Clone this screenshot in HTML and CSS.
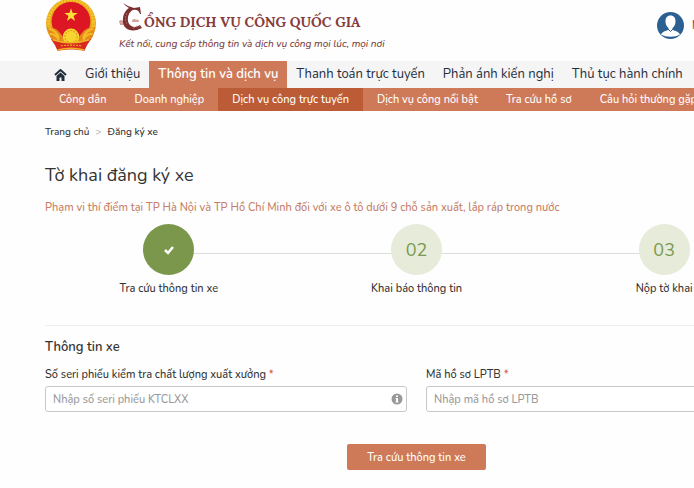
FILE: index.html
```html
<!DOCTYPE html>
<html lang="vi">
<head>
    <meta charset="UTF-8">
    <meta name="viewport" content="width=device-width, initial-scale=1.0">
    <title>Tờ khai đăng ký xe</title>
    <link rel="stylesheet" href="styles.css">
</head>
<body>

    <header class="header">
        <svg class="emblem" viewBox="0 0 50 51" aria-hidden="true">
            <circle cx="25" cy="23" r="24.500" fill="#e9a81c"/>
            <circle cx="25" cy="22" r="22" fill="none" stroke="#f3c52b" stroke-width="3" stroke-dasharray="2 1"/>
            <circle cx="25" cy="21" r="19" fill="#dc1622"/>
            <path d="M25 8l1.600 4.700h4.900l-4 3 1.500 4.800-4-2.900-4 2.900 1.500-4.800-4-3h4.900z" fill="#ffe036"/>
            <path d="M1 27c5-1 10 1 13 5l4 5h14l4-5c3-4 8-6 13-5l-3 10-7 6H12l-7-6z" fill="#e58a1c"/>
            <path d="M3 28c4 1 8 4 10 9M4 33c4 0 7 2 9 6M47 28c-4 1-8 4-10 9M46 33c-4 0-7 2-9 6" fill="none" stroke="#f5bd25" stroke-width="2"/>
            <circle cx="25" cy="36" r="8" fill="#f9d62f"/>
            <circle cx="25" cy="36" r="6" fill="none" stroke="#dd9d1d" stroke-width="1" stroke-dasharray="2 1"/>
            <path d="M5 38c13 5 27 5 40 0l-4 6-3 6c-8-2-18-2-26 0l-3-6z" fill="#d92a20"/>
            <path d="M7 39c12 4 24 4 36 0M12 49c8-2 18-2 26 0" fill="none" stroke="#f2b323" stroke-width="1.500"/>
            <path d="M15 45c7-1 13-1 20 0" fill="none" stroke="#efb024" stroke-width="1" stroke-dasharray="2 1"/>
        </svg>
        <div class="brand">
            <div class="brand-name">
                <svg class="brand-mark" viewBox="0 0 25 29" aria-hidden="true">
                    <path d="M0 20c0-2 3-3 4-1 1-2 4-1 4 1v2H1zM1 23h7v-1H1zM13 19c0-2 3-3 4-1 2-1 3 0 3 2h-7z" fill="#d3a49d"/>
                    <path d="M4 1l5 3 6 2 6-1 1 7h-1c-1-4-4-5-7-4-5 2-7 11-3 15 3 3 7 2 10 0l2 3-5 2C9 30 3 25 4 17c0-5 3-9 6-11L7 4z" fill="#7d3030"/>
                    <path d="M8 11c-2 4-2 8 0 11M14 26l7-2" fill="none" stroke="#ad665c" stroke-width="1" stroke-dasharray="2 1"/>
                </svg>
                <span>ỔNG DỊCH VỤ CÔNG QUỐC GIA</span>
            </div>
            <p class="slogan">Kết nối, cung cấp thông tin và dịch vụ công mọi lúc, mọi nơi</p>
        </div>
        <a class="account" href="#">
            <svg class="avatar" viewBox="0 0 27 27" aria-hidden="true">
                <circle cx="13.500" cy="13.500" r="13.500" fill="#2c6093"/>
                <path d="M13.500 3.500c3.500 0 5 2.500 5 6 0 3-1.500 5.500-3 6.500v2c3 1 6 1.500 7.500 4.500-5 3-14 3-19 0 1.500-3 4.500-3.500 7.500-4.500v-2c-1.500-1-3-3.500-3-6.500 0-3.500 1.500-6 5-6z" fill="#fff"/>
                <path d="M11 17l2.500 2.500L16 17" fill="none" stroke="#2c6093" stroke-width="1"/>
            </svg>
            <span>N</span>
        </a>
    </header>

    <nav class="main-nav">
        <a class="home" href="#" aria-label="Trang chủ">
            <svg viewBox="0 0 13 12" aria-hidden="true">
                <path d="M1 6l5.500-5L12 6" fill="none" stroke="#1f2d3d" stroke-width="2"/>
                <path d="M2.500 7l4-3.500 4 3.500v5h-3V8.500h-2V12h-3z" fill="#1f2d3d"/>
            </svg>
        </a>
        <a href="#">Giới thiệu</a>
        <a class="active" href="#">Thông tin và dịch vụ</a>
        <a href="#">Thanh toán trực tuyến</a>
        <a href="#">Phản ánh kiến nghị</a>
        <a href="#">Thủ tục hành chính</a>
    </nav>
    <nav class="sub-nav">
        <a href="#">Công dân</a>
        <a href="#">Doanh nghiệp</a>
        <a class="active" href="#">Dịch vụ công trực tuyến</a>
        <a href="#">Dịch vụ công nổi bật</a>
        <a href="#">Tra cứu hồ sơ</a>
        <a href="#">Câu hỏi thường gặp</a>
    </nav>

    <main class="container">
        <div class="breadcrumb">
            <a href="#">Trang chủ</a>
            <span class="separator">&gt;</span>
            <a href="#">Đăng ký xe</a>
        </div>

        <h1>Tờ khai đăng ký xe</h1>
        <p class="notice">Phạm vi thí điểm tại TP Hà Nội và TP Hồ Chí Minh đối với xe ô tô dưới 9 chỗ sản xuất, lắp ráp trong nước</p>

        <ol class="steps">
            <li class="step done">
                <span class="circle">
                    <svg viewBox="0 0 12 10" aria-hidden="true"><path d="M2 5l3 3 5-6" fill="none" stroke="#fff" stroke-width="2.500"/></svg>
                </span>
                <span>Tra cứu thông tin xe</span>
            </li>
            <li class="step">
                <span class="circle">02</span>
                <span>Khai báo thông tin</span>
            </li>
            <li class="step">
                <span class="circle">03</span>
                <span>Nộp tờ khai</span>
            </li>
        </ol>

        <form class="search-form">
            <h2>Thông tin xe</h2>
            <div class="fields">
                <div class="field">
                    <label for="seri">Số seri phiếu kiểm tra chất lượng xuất xưởng <span class="required">*</span></label>
                    <div class="input-wrap">
                        <input type="text" id="seri" placeholder="Nhập số seri phiếu KTCLXX">
                        <svg class="info" viewBox="0 0 12 12" aria-hidden="true">
                            <circle cx="6" cy="6" r="5.500" fill="#999"/>
                            <path d="M5 2.500h2v1.500H5zM4.500 5H7v3.500h.5v1h-3v-1H5V6h-.5z" fill="#fff"/>
                        </svg>
                    </div>
                </div>
                <div class="field">
                    <label for="code">Mã hồ sơ LPTB <span class="required">*</span></label>
                    <div class="input-wrap">
                        <input type="text" id="code" placeholder="Nhập mã hồ sơ LPTB">
                    </div>
                </div>
            </div>
            <button type="button">Tra cứu thông tin xe</button>
        </form>
    </main>

</body>
</html>
```
FILE: styles.css
```css
* {
    margin: 0;
    padding: 0;
    box-sizing: border-box;
}

html {
    overflow-x: hidden;
}

body {
    min-width: 833px;
    background: #fefefe;
    color: #333;
    font-family: Nunito, Lato, "Noto Sans", sans-serif;
    font-size: 11px;
    font-weight: 500;
    line-height: 16px;
}

a {
    color: inherit;
    text-decoration: none;
    white-space: nowrap;
}

.header {
    display: flex;
    align-items: flex-start;
    height: 61px;
    padding: 0 45px;
}

.emblem {
    width: 52px;
    height: 52px;
    margin-right: 22px;
}

.brand-name {
    display: flex;
    align-items: flex-end;
    height: 34px;
    color: #873c3c;
    font-family: Lora, "Liberation Serif", serif;
    font-size: 14px;
    font-weight: bold;
    line-height: 24px;
}

.brand-mark {
    width: 25px;
    height: 29px;
    margin-bottom: 3px;
}

.slogan {
    margin-top: 2px;
    color: #7a4040;
    font-size: 10px;
    font-style: italic;
}

.account {
    display: flex;
    align-items: center;
    gap: 8px;
    width: 131px;
    margin-top: 12px;
    margin-left: auto;
    color: #873c3c;
}

.avatar {
    width: 27px;
    height: 27px;
}

.main-nav {
    display: flex;
    padding: 0 45px;
    background: #f5f5f5;
    color: #1f2d3d;
    font-size: 13px;
    font-weight: normal;
    line-height: 27px;
}

.main-nav a {
    padding: 0 9px;
}

.home svg {
    width: 13px;
    height: 12px;
    vertical-align: middle;
}

.main-nav .active {
    background: #ce7a58;
    color: #fff;
    font-weight: 600;
}

.sub-nav {
    display: flex;
    padding: 0 45px;
    background: #ce7a58;
    color: #fff;
    line-height: 23px;
}

.sub-nav a {
    padding: 0 14px;
}

.sub-nav .active {
    background: #bb5c36;
}

.container {
    padding: 13px 45px;
}

.breadcrumb {
    display: flex;
    gap: 6px;
    font-size: 10px;
}

.separator {
    color: #aaa;
}

h1 {
    margin-top: 23px;
    font-size: 18px;
    font-weight: normal;
    line-height: 24px;
}

.notice {
    margin-top: 13px;
    color: #c67e68;
}

.steps {
    display: grid;
    grid-template-columns: repeat(3, 1fr);
    margin-top: 8px;
    padding-bottom: 28px;
    border-bottom: 1px solid #eee;
    list-style: none;
}

.step {
    display: flex;
    flex-direction: column;
    align-items: center;
    gap: 6px;
    position: relative;
}

/* line to the previous step */
.step + .step::before {
    content: "";
    position: absolute;
    top: 29px;
    right: 50%;
    width: 100%;
    border-top: 1px solid #dcdfd8;
}

.circle {
    display: flex;
    align-items: center;
    justify-content: center;
    width: 51px;
    height: 51px;
    border-radius: 50%;
    background: #e6ebda;
    color: #7a9a4f;
    font-size: 18px;
    font-weight: normal;
    z-index: 1;
}

.step.done {
    z-index: 1;
}

.done .circle {
    background: #7b974b;
}

.circle svg {
    width: 12px;
    height: 10px;
}

h2 {
    margin-top: 12px;
    font-size: 13px;
    font-weight: 600;
    line-height: 18px;
}

.fields {
    display: grid;
    grid-template-columns: 1fr 1fr;
    gap: 19px;
    margin-top: 11px;
}

.field label {
    display: block;
    margin-bottom: 3px;
}

.required {
    color: #d9534f;
}

.input-wrap {
    position: relative;
}

input {
    display: block;
    width: 100%;
    height: 26px;
    padding: 0 7px;
    border: 1px solid #c8c8c8;
    border-radius: 3px;
    background: #fff;
    font-family: inherit;
    font-size: 11px;
    font-weight: 500;
}

input::placeholder {
    color: #999;
}

.info {
    position: absolute;
    top: 7px;
    right: 4px;
    width: 12px;
    height: 12px;
}

button {
    display: block;
    height: 26px;
    margin: 32px auto 0;
    padding: 0 20px;
    border: none;
    border-radius: 2px;
    background: #ce7a58;
    color: #fff;
    font-family: inherit;
    font-size: 11px;
    font-weight: 500;
    cursor: pointer;
}
```
